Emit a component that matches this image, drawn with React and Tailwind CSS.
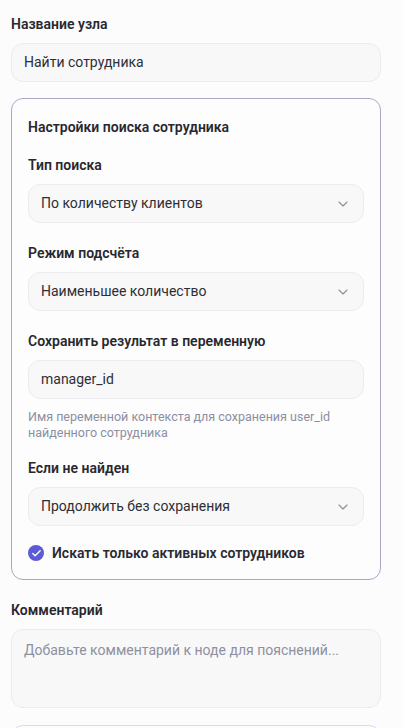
import { ChevronDown, Check } from 'lucide-react';

function Label({ children }) {
    return <div className="text-[14px] leading-5 font-semibold text-[#28282e] mb-[9px]">{children}</div>;
}

function Field({ children, className = '' }) {
    return (
        <div className={`h-[39px] flex items-center justify-between px-3 rounded-xl bg-[#f8f8f9] border border-[#ececf0] text-[14px] text-[#2e2e35] ${className}`}>
            {children}
        </div>
    );
}

function Select({ value }) {
    return (
        <Field>
            <span>{value}</span>
            <ChevronDown size={16} strokeWidth={1.6} className="text-[#8c8c96]" />
        </Field>
    );
}

export default function App() {
    return (
        <div className="min-h-screen bg-[#fcfcfd] font-['Roboto',sans-serif] overflow-hidden">
            <div className="w-[370px] ml-[11px] pt-[14px]">
                <Label>Название узла</Label>
                <Field className="mt-px">Найти сотрудника</Field>

                <div className="mt-4 rounded-xl border border-[#a9a6c9] bg-[#fdfdfe] px-4 pt-[18px] pb-[18px]">
                    <div className="text-[14px] leading-5 font-semibold text-[#28282e]">Настройки поиска сотрудника</div>

                    <div className="mt-[18px]">
                        <Label>Тип поиска</Label>
                        <Select value="По количеству клиентов" />
                    </div>

                    <div className="mt-5">
                        <Label>Режим подсчёта</Label>
                        <Select value="Наименьшее количество" />
                    </div>

                    <div className="mt-5">
                        <Label>Сохранить результат в переменную</Label>
                        <Field>manager_id</Field>
                        <p className="mt-[10px] text-[12.5px] leading-4 text-[#8b8fa2]">
                            Имя переменной контекста для сохранения user_id
                            <br />
                            найденного сотрудника
                        </p>
                    </div>

                    <div className="mt-[17px]">
                        <Label>Если не найден</Label>
                        <Select value="Продолжить без сохранения" />
                    </div>

                    <label className="mt-[19px] h-4 flex items-center gap-2">
                        <span className="w-4 h-4 rounded-full bg-[#5b5bd6] flex items-center justify-center">
                            <Check size={11} strokeWidth={3} className="text-white" />
                        </span>
                        <span className="text-[14px] leading-4 font-semibold text-[#2a2a31]">Искать только активных сотрудников</span>
                    </label>
                </div>

                <div className="mt-5">
                    <Label>Комментарий</Label>
                    <div className="h-[79px] px-3 py-2.5 rounded-xl bg-[#f8f8f9] border border-[#ececf0] text-[14px] leading-5 text-[#8e909e]">
                        Добавьте комментарий к ноде для пояснений...
                    </div>
                </div>

                <div className="mt-[17px] h-12 rounded-xl border border-[#dcd7f7] bg-[#fdfdfe]"></div>
            </div>
        </div>
    );
}
